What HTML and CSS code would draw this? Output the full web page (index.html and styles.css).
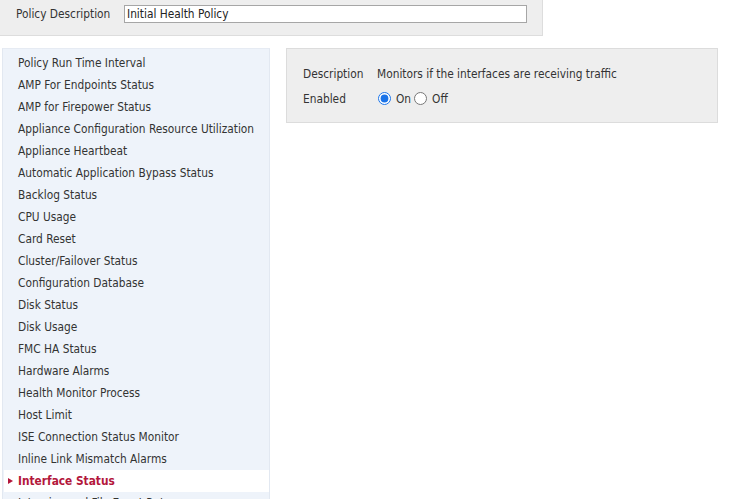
FILE: index.html
```html
<!DOCTYPE html>
<html>
<head>
<meta charset="utf-8">
<link rel="stylesheet" href="styles.css">
</head>
<body>
<div class="top">
  <span class="top-label">Policy Description</span>
  <input class="top-input" type="text" value="Initial Health Policy">
</div>
<div class="main">
  <ul class="list">
    <li class="item">Policy Run Time Interval</li>
    <li class="item">AMP For Endpoints Status</li>
    <li class="item">AMP for Firepower Status</li>
    <li class="item">Appliance Configuration Resource Utilization</li>
    <li class="item">Appliance Heartbeat</li>
    <li class="item">Automatic Application Bypass Status</li>
    <li class="item">Backlog Status</li>
    <li class="item">CPU Usage</li>
    <li class="item">Card Reset</li>
    <li class="item">Cluster/Failover Status</li>
    <li class="item">Configuration Database</li>
    <li class="item">Disk Status</li>
    <li class="item">Disk Usage</li>
    <li class="item">FMC HA Status</li>
    <li class="item">Hardware Alarms</li>
    <li class="item">Health Monitor Process</li>
    <li class="item">Host Limit</li>
    <li class="item">ISE Connection Status Monitor</li>
    <li class="item">Inline Link Mismatch Alarms</li>
    <li class="item selected"><span class="arrow"></span>Interface Status</li>
    <li class="item">Intrusion and File Event Rate</li>
  </ul>
  <div class="detail">
    <div class="row">
      <span class="dlabel">Description</span>
      <span class="dvalue">Monitors if the interfaces are receiving traffic</span>
    </div>
    <div class="row">
      <span class="dlabel">Enabled</span>
      <label class="radio"><input type="radio" name="en" checked>On</label>
      <label class="radio"><input type="radio" name="en">Off</label>
    </div>
  </div>
</div>
</body>
</html>
```
FILE: styles.css
```css
html, body {
  margin: 0;
  padding: 0;
  background: #ffffff;
  font-family: "DejaVu Sans Condensed", "DejaVu Sans", sans-serif;
  font-size: 11.8px;
  color: #333333;
  overflow: hidden;
}
.top {
  box-sizing: border-box;
  width: 543px;
  height: 36px;
  background: #eeeeee;
  border-right: 1px solid #dddddd;
  border-bottom: 1px solid #dddddd;
  display: flex;
  align-items: flex-start;
  padding: 5px 0 0 16px;
}
.top-label {
  width: 108px;
  line-height: 18px;
}
.top-input {
  box-sizing: border-box;
  width: 403px;
  height: 18px;
  margin: 0;
  padding: 0 2px;
  border: 1px solid #a6a6a6;
  background: #ffffff;
  font: inherit;
  color: #222222;
  outline: none;
}
.main {
  display: flex;
  align-items: flex-start;
  margin-top: 12px;
  gap: 16px;
}
.list {
  box-sizing: border-box;
  list-style: none;
  margin: 0 0 0 2px;
  padding: 3px 0 0 0;
  width: 268px;
  background: #eef3fa;
  border-left: 1px solid #e2e8f1;
  border-right: 1px solid #e2e8f1;
  border-top: 1px solid #e6ebf3;
}
.item {
  height: 22px;
  line-height: 22px;
  padding-left: 15px;
  white-space: nowrap;
}
.item.selected {
  background: #ffffff;
  color: #b3173c;
  font-weight: bold;
  padding-left: 4px;
  margin-left: 1px;
  display: flex;
  align-items: center;
}
.arrow {
  width: 0;
  height: 0;
  border-top: 3.5px solid transparent;
  border-bottom: 3.5px solid transparent;
  border-left: 5px solid #b3173c;
  margin-right: 5px;
}
.detail {
  box-sizing: border-box;
  width: 432px;
  height: 75px;
  background: #eeeeee;
  border: 1px solid #dcdcdc;
  padding: 12px 0 0 16px;
}
.row {
  display: flex;
  align-items: center;
  height: 25px;
}
.dlabel {
  width: 74px;
}
.radio {
  display: flex;
  align-items: center;
  margin-right: 2px;
}
.radio input {
  width: 13px;
  height: 13px;
  margin: 0 5px 0 1px;
  accent-color: #1a73e8;
}
```
